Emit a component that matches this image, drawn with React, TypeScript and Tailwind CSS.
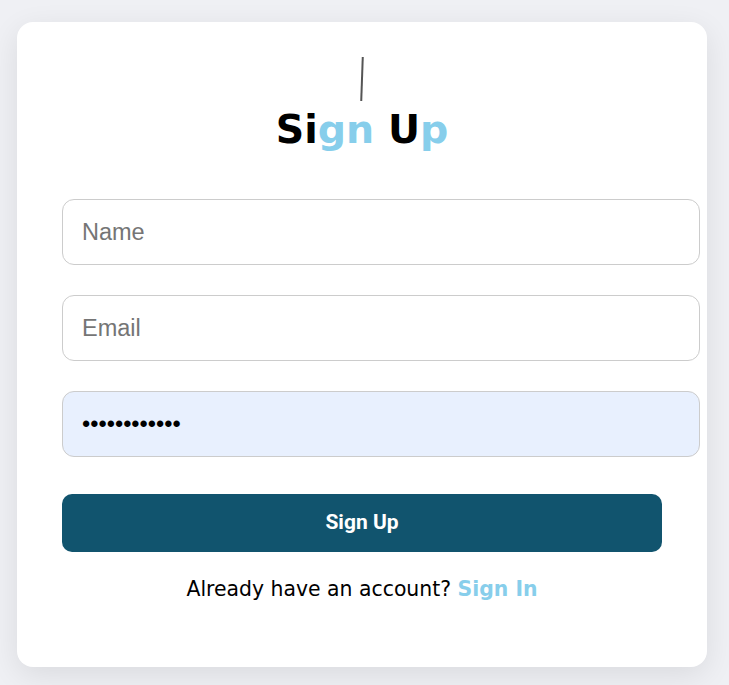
import React from "react";

const fields = [
  { type: "text", placeholder: "Name", value: undefined as string | undefined },
  { type: "email", placeholder: "Email", value: undefined as string | undefined },
  { type: "password", placeholder: "Password", value: "secretpass12" },
];

export default function App() {
  return (
    <div className="min-h-screen bg-[#eff0f4] pt-[22px] pl-[17px]">
      <div className="w-[690px] h-[645px] bg-white rounded-[16px] shadow-[0_8px_30px_rgba(0,0,0,0.09)] px-[45px] pt-[35px]">
        <div className="flex flex-col items-center">
          <span className="block w-[2px] h-[44px] bg-[#555] rotate-[2deg]" />
          <h1 className="mt-[3px] text-[39.5px] leading-[50px] font-bold font-['DejaVu_Sans',sans-serif]">
            <span className="text-black">Si</span>
            <span className="text-[#87ceeb]">gn</span>
            <span className="text-black"> U</span>
            <span className="text-[#87ceeb]">p</span>
          </h1>
        </div>

        <form className="mt-[45px] flex flex-col gap-[30px]">
          {fields.map((f) => (
            <input
              key={f.placeholder}
              type={f.type}
              placeholder={f.placeholder}
              defaultValue={f.value}
              className={`w-[638px] h-[66px] rounded-[12px] border border-[#cccccc] px-[19px] text-[23.5px] font-['Liberation_Sans',Arial,sans-serif] text-black placeholder:text-[#757575] outline-none ${
                f.type === "password" ? "bg-[#e8f0fe]" : "bg-white"
              }`}
            />
          ))}
        </form>

        <button className="mt-[37px] w-full h-[58px] rounded-[10px] bg-[#11546e] text-white text-[21px] font-bold font-['Roboto',sans-serif]">
          Sign Up
        </button>

        <p className="mt-[22px] text-center text-[20.4px] text-black font-['DejaVu_Sans',sans-serif]">
          Already have an account?{" "}
          <a className="font-bold text-[#87ceeb]">Sign In</a>
        </p>
      </div>
    </div>
  );
}
